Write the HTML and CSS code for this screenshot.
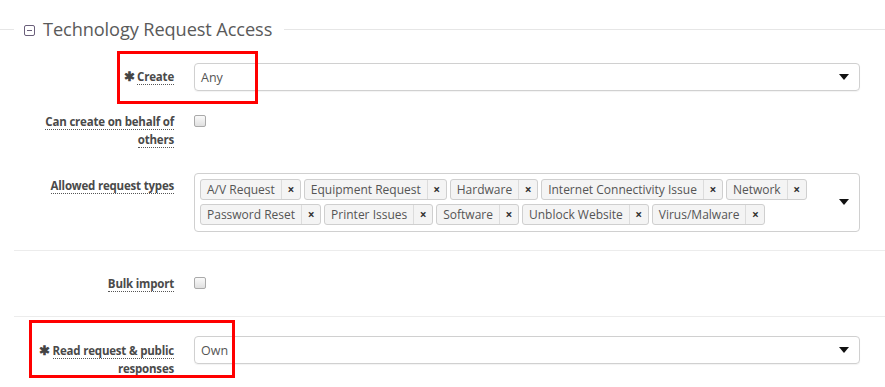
FILE: index.html
```html
<!DOCTYPE html>
<html lang="en">
<head>
  <meta charset="UTF-8" />
  <title>Technology Request Access</title>
  <meta name="viewport" content="width=device-width,initial-scale=1" />
  <link rel="stylesheet" href="styles.css">
</head>
<body>
  <div class="panel">
    <!-- section title with collapse icon -->
    <div class="legend">
      <span class="legend-line short"></span>
      <svg class="collapse-icon" width="11" height="11" viewBox="0 0 11 11">
        <rect x="0.5" y="0.5" width="10" height="10" rx="1.5" fill="none" stroke="#6a5f7a" stroke-width="1"/>
        <line x1="3" y1="5.5" x2="8" y2="5.5" stroke="#6a5f7a" stroke-width="1"/>
      </svg>
      <span class="legend-title">Technology Request Access</span>
      <span class="legend-line"></span>
    </div>

    <div class="row row-create">
      <div class="label-col"><span class="req">&#10033;</span> <span class="lbl">Create</span></div>
      <div class="control">
        <div class="select"><span>Any</span><span class="caret"></span></div>
      </div>
      <div class="mark mark-create"></div>
    </div>

    <div class="row row-behalf">
      <div class="label-col"><span class="lbl">Can create on behalf of others</span></div>
      <div class="control"><span class="checkbox"></span></div>
    </div>

    <div class="row row-types">
      <div class="label-col"><span class="lbl">Allowed request types</span></div>
      <div class="control">
        <div class="multi">
          <div class="tags">
            <span class="tag">A/V Request<b>&times;</b></span>
            <span class="tag">Equipment Request<b>&times;</b></span>
            <span class="tag">Hardware<b>&times;</b></span>
            <span class="tag">Internet Connectivity Issue<b>&times;</b></span>
            <span class="tag">Network<b>&times;</b></span>
            <span class="tag">Password Reset<b>&times;</b></span>
            <span class="tag">Printer Issues<b>&times;</b></span>
            <span class="tag">Software<b>&times;</b></span>
            <span class="tag">Unblock Website<b>&times;</b></span>
            <span class="tag">Virus/Malware<b>&times;</b></span>
          </div>
          <span class="caret"></span>
        </div>
      </div>
    </div>

    <hr class="sep sep-1">

    <div class="row row-bulk">
      <div class="label-col"><span class="lbl">Bulk import</span></div>
      <div class="control"><span class="checkbox"></span></div>
    </div>

    <hr class="sep sep-2">

    <div class="row row-read">
      <div class="label-col"><span class="req">&#10033;</span> <span class="lbl">Read request &amp; public responses</span></div>
      <div class="control">
        <div class="select"><span>Own</span><span class="caret"></span></div>
      </div>
      <div class="mark mark-read"></div>
    </div>
  </div>
</body>
</html>
```

FILE: styles.css
```css
body {
    margin: 0;
    background: #fff;
    font-family: "Open Sans", "Noto Sans", sans-serif;
    color: #555;
}

.panel {
    width: 885px;
}

/* legend: line - icon - title - line */
.legend {
    display: flex;
    align-items: center;
    height: 58px;
}

.legend-line {
    flex: 1;
    height: 1px;
    background: #e6e6e6;
    margin-left: 12px;
}

.legend-line.short {
    flex: none;
    width: 14px;
    margin: 0 10px 0 0;
}

.collapse-icon {
    display: block;
    margin-top: 2px;
}

.legend-title {
    margin-left: 8px;
    font-size: 18.2px;
    color: #5a5a5a;
    letter-spacing: -0.1px;
}

.row {
    position: relative;
    display: flex;
}

.label-col {
    width: 140px;
    padding-left: 34px;
    text-align: right;
    font-size: 11.5px;
    font-weight: bold;
    line-height: 18px;
    color: #4a4a4a;
    letter-spacing: -0.2px;
}

.lbl {
    border-bottom: 1px dotted #555;
}

.req {
    font-size: 13px;
    color: #444;
}

.control {
    width: 666px;
    margin-left: 20px;
}

.select {
    display: flex;
    align-items: center;
    justify-content: space-between;
    height: 26px;
    padding: 0 10px 0 6px;
    border: 1px solid #d0d0d0;
    border-radius: 4px;
    box-shadow: 0 1px 1px rgba(0, 0, 0, 0.05);
    font-size: 12.5px;
    color: #555;
}

.caret {
    width: 0;
    height: 0;
    border-left: 5px solid transparent;
    border-right: 5px solid transparent;
    border-top: 6px solid #111;
}

.checkbox {
    display: block;
    width: 10px;
    height: 10px;
    border: 1px solid #aaa;
    border-radius: 2px;
    background: linear-gradient(#fafafa, #e0e0e0);
    margin-top: 2px;
}

.row-create {
    margin-top: 5px;
}

.row-create .label-col {
    padding-top: 4px;
}

.row-behalf {
    margin-top: 22px;
}

.row-types {
    margin-top: 24px;
}

.row-types .label-col {
    padding-top: 4px;
}

.multi {
    display: flex;
    align-items: center;
    border: 1px solid #d0d0d0;
    border-radius: 4px;
    padding: 5px 10px 6px 5px;
}

.tags {
    flex: 1;
    display: flex;
    flex-wrap: wrap;
    gap: 4px 3px;
}

.tag {
    display: flex;
    align-items: center;
    height: 19px;
    padding-left: 6px;
    border: 1px solid #cfcfcf;
    border-radius: 3px;
    background: #f4f4f4;
    font-size: 12px;
    color: #555;
}

.tag b {
    margin-left: 6px;
    width: 18px;
    height: 19px;
    line-height: 19px;
    text-align: center;
    border-left: 1px solid #dcdcdc;
    font-size: 12px;
    color: #333;
}

.sep {
    margin: 18px 0 0 14px;
    border: 0;
    border-top: 1px solid #ececec;
    height: 0;
}

.sep-2 {
    margin-top: 23px;
}

.row-bulk {
    margin-top: 24px;
}

.row-read {
    margin-top: 19px;
}

.row-read .label-col {
    padding-top: 5px;
}

/* red annotation boxes drawn over the form */
.mark {
    position: absolute;
    border: 3px solid #f00;
}

.mark-create {
    left: 117px;
    top: -12px;
    width: 135px;
    height: 47px;
}

.mark-read {
    left: 29px;
    top: -16px;
    width: 200px;
    height: 52px;
}
```
